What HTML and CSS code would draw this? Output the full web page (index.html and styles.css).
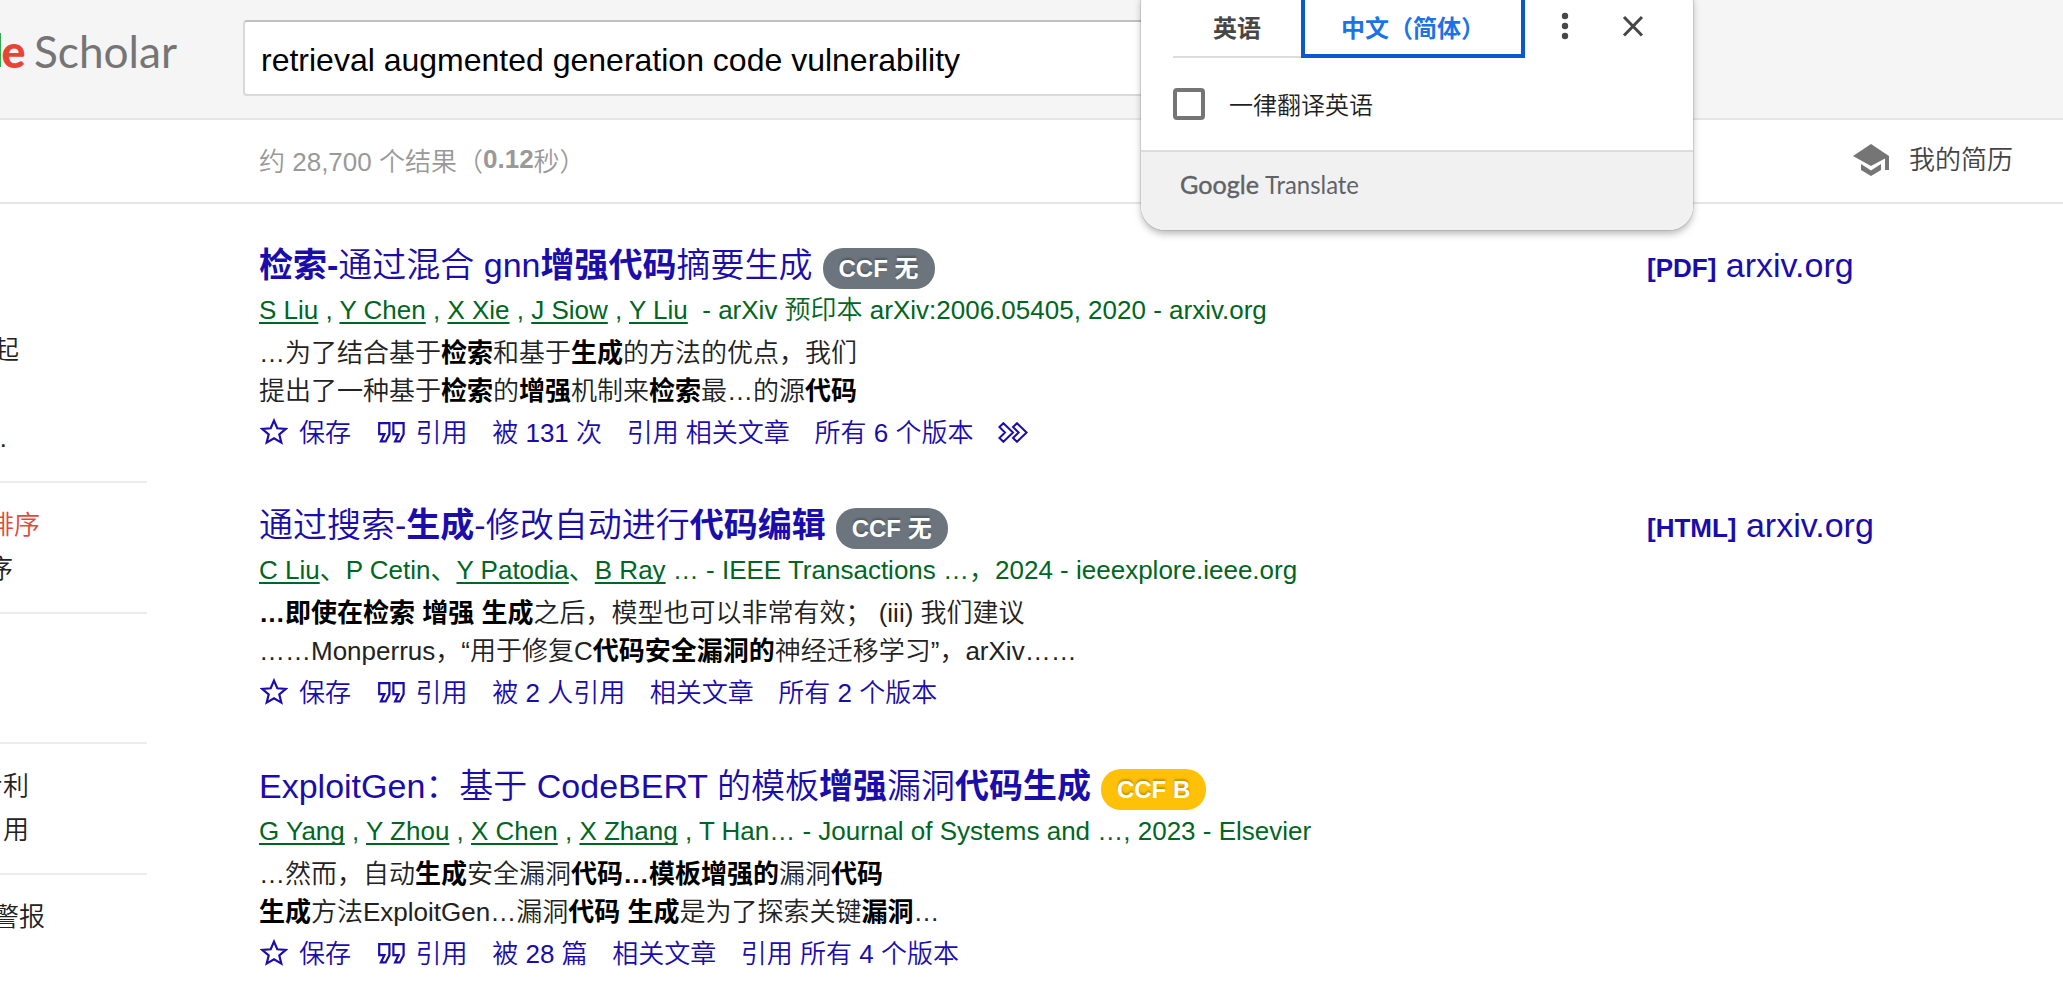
FILE: index.html
```html
<!DOCTYPE html>
<html lang="zh-CN">
<head>
<meta charset="utf-8">
<title>retrieval augmented generation code vulnerability - Google Scholar</title>
<link rel="stylesheet" href="styles.css">
</head>
<body>
<svg class="defs" width="0" height="0">
  <symbol id="star" viewBox="0 0 28 27"><path d="M14 2.6 17.3 10.3 25.7 11 19.3 16.5 21.3 24.6 14 20.3 6.7 24.6 8.7 16.5 2.3 11 10.7 10.3Z" fill="none" stroke="#1a0dab" stroke-width="2.2"/></symbol>
  <symbol id="quote" viewBox="0 0 27 21"><path d="M1.2 1.2H11.4V12.2L7.600 19.4H2.9L6.4 12.2H1.2ZM15.4 1.2H25.6V12.2L21.8 19.4H17.1L20.6 12.2H15.4Z" fill="none" stroke="#1a0dab" stroke-width="2.2"/></symbol>
  <symbol id="more" viewBox="0 0 30 21"><path d="M1.4 5 5.4 1.2 15 10.5 5.4 19.8 1.4 16 7 10.5ZM15 5 19 1.2 28.6 10.5 19 19.8 15 16 20.6 10.5Z" fill="none" stroke="#1a0dab" stroke-width="2"/></symbol>
</svg>

<header class="top">
  <svg class="logo" width="200" height="118">
    <rect x="0" y="33" width="1" height="34" fill="#34a853"/>
    <text x="1.5" y="68" class="logo-e" textLength="24" lengthAdjust="spacingAndGlyphs">e</text>
    <text x="34" y="68" class="logo-s" textLength="143" lengthAdjust="spacingAndGlyphs">Scholar</text>
  </svg>
  <div class="search">retrieval augmented generation code vulnerability</div>
</header>

<div class="bar">
  <div class="stats">约 28,700 个结果（<b>0.12</b>秒）</div>
  <a class="profile">
    <svg width="36" height="32" viewBox="0 0 36 32"><path d="M18 0 36 12V26H32V14.5L18 22 0 12ZM8 20 18 26.6 28 20V26L18 32 8 26Z" fill="#757575"/></svg>
    我的简历
  </a>
</div>

<div class="main">
  <nav class="side">
    <ul class="group first">
      <li class="w19">起</li>
      <li class="w8 gap">…</li>
    </ul>
    <ul class="group">
      <li class="w40 on">排序</li>
      <li class="w13">序</li>
    </ul>
    <ul class="group blank"></ul>
    <ul class="group">
      <li class="w29">专利</li>
      <li class="w29">引用</li>
    </ul>
    <ul class="group">
      <li class="w45">警报</li>
    </ul>
  </nav>

  <div class="results">
    <article class="result">
      <div class="body">
        <h3 class="title"><a><b>检索-</b>通过混合 gnn<b>增强代码</b>摘要生成</a><span class="badge">CCF 无</span></h3>
        <div class="meta"><u>S Liu</u> , <u>Y Chen</u> , <u>X Xie</u> , <u>J Siow</u> , <u>Y Liu</u>&nbsp; - arXiv 预印本 arXiv:2006.05405, 2020 - arxiv.org</div>
        <p class="snippet">…为了结合基于<b>检索</b>和基于<b>生成</b>的方法的优点，我们<br>提出了一种基于<b>检索</b>的<b>增强</b>机制来<b>检索</b>最…的源<b>代码</b></p>
        <div class="links"><a class="save"><svg width="28" height="27"><use href="#star"/></svg>保存</a><a class="cite"><svg width="27" height="21"><use href="#quote"/></svg>引用</a><a>被 131 次</a><a>引用 相关文章</a><a>所有 6 个版本</a><svg class="more" width="30" height="21"><use href="#more"/></svg></div>
      </div>
      <a class="source"><b>[PDF]</b> arxiv.org</a>
    </article>

    <article class="result second">
      <div class="body">
        <h3 class="title"><a>通过搜索-<b>生成</b>-修改自动进行<b>代码编辑</b></a><span class="badge">CCF 无</span></h3>
        <div class="meta"><u>C Liu</u>、P Cetin、<u>Y Patodia</u>、<u>B Ray</u> … - IEEE Transactions …，2024 - ieeexplore.ieee.org</div>
        <p class="snippet"><b>…即使在检索 增强 生成</b>之后，模型也可以非常有效； (iii) 我们建议<br>……Monperrus，“用于修复C<b>代码安全漏洞的</b>神经迁移学习”，arXiv……</p>
        <div class="links"><a class="save"><svg width="28" height="27"><use href="#star"/></svg>保存</a><a class="cite"><svg width="27" height="21"><use href="#quote"/></svg>引用</a><a>被 2 人引用</a><a>相关文章</a><a>所有 2 个版本</a></div>
      </div>
      <a class="source"><b>[HTML]</b> arxiv.org</a>
    </article>

    <article class="result">
      <div class="body">
        <h3 class="title"><a>ExploitGen：基于 CodeBERT 的模板<b>增强</b>漏洞<b>代码生成</b></a><span class="badge gold">CCF B</span></h3>
        <div class="meta"><u>G Yang</u> , <u>Y Zhou</u> , <u>X Chen</u> , <u>X Zhang</u> , T Han… - Journal of Systems and …, 2023 - Elsevier</div>
        <p class="snippet">…然而，自动<b>生成</b>安全漏洞<b>代码…模板增强的</b>漏洞<b>代码</b><br><b>生成</b>方法ExploitGen…漏洞<b>代码 生成</b>是为了探索关键<b>漏洞</b>…</p>
        <div class="links"><a class="save"><svg width="28" height="27"><use href="#star"/></svg>保存</a><a class="cite"><svg width="27" height="21"><use href="#quote"/></svg>引用</a><a>被 28 篇</a><a>相关文章</a><a>引用 所有 4 个版本</a></div>
      </div>
    </article>
  </div>
</div>

<aside class="popup">
  <div class="tabs">
    <span class="tab">英语</span><span class="tab active">中文（简体）</span>
    <svg class="dots" width="8" height="58"><circle cx="4" cy="16" r="3.2"/><circle cx="4" cy="26" r="3.2"/><circle cx="4" cy="36" r="3.2"/></svg>
    <svg class="close" width="22" height="58"><path d="M2 17 20 35.500M20 17 2 35.500" stroke="#474747" stroke-width="3"/></svg>
  </div>
  <label class="always"><span class="box"></span><span class="label">一律翻译英语</span></label>
  <div class="foot">
    <svg width="200" height="50">
      <text x="0" y="32" class="brand strong" textLength="79" lengthAdjust="spacingAndGlyphs">Google</text>
      <text x="85" y="32" class="brand" textLength="94" lengthAdjust="spacingAndGlyphs">Translate</text>
    </svg>
  </div>
</aside>
</body>
</html>
```
FILE: styles.css
```css
* { box-sizing: border-box; }

body {
  margin: 0;
  width: 2063px;
  height: 995px;
  overflow: hidden;
  position: relative;
  background: #fff;
  color: #222;
  font: 350 26px/38px "Liberation Sans", "Noto Sans CJK SC", sans-serif;
  text-spacing-trim: space-all;
  white-space: nowrap;
}

b { font-weight: 700; }

.defs { position: absolute; }

/* Header */
.top {
  display: flex;
  height: 120px;
  background: #f5f5f5;
  border-bottom: 2px solid #e5e5e5;
}

.logo { flex: none; margin-right: 43px; }
.logo-e { font: 900 46px Lato, sans-serif; fill: #ea4335; }
.logo-s { font: 400 45px Lato, sans-serif; fill: #757575; }

.search {
  width: 1100px;
  height: 76px;
  margin-top: 20px;
  padding-left: 16px;
  background: #fff;
  border: 2px solid #d9d9d9;
  border-top-color: #c0c0c0;
  border-radius: 4px;
  color: #000;
  font-size: 32px;
  line-height: 77px;
}

/* Result count and profile link */
.bar {
  display: flex;
  justify-content: space-between;
  height: 84px;
  padding: 0 50px 0 259px;
  border-bottom: 2px solid #e5e5e5;
}

.stats { color: #999; line-height: 84px; }
.stats b { display: inline-block; transform: translateY(-3px); }

.profile {
  display: flex;
  align-items: center;
  gap: 20px;
  height: 80px;
  color: #444;
}

.main { display: flex; }

/* Sidebar */
.side { width: 259px; flex: none; }

.group {
  list-style: none;
  width: 147px;
  margin: 0;
  height: 131px;
  padding: 20px 0 0;
  border-top: 2px solid #ededed;
}

.group.first { height: 277px; padding-top: 124px; border: 0; }
.group.blank { height: 130px; }
.group li {
  display: flex;
  justify-content: flex-end;
  height: 44px;
  line-height: 44px;
}
.group .gap { margin-top: 44px; }
.group .on { color: #dd4b39; }
.w8 { width: 8px; }
.w13 { width: 13px; }
.w19 { width: 19px; }
.w29 { width: 29px; }
.w40 { width: 40px; }
.w45 { width: 45px; }

/* Results */
.results { flex: 1; padding-top: 37px; }

.result {
  display: flex;
  height: 211px;
  margin-bottom: 49px;
}
.result.second { margin-bottom: 50px; }

.body { width: 1388px; flex: none; }

.title {
  display: flex;
  align-items: baseline;
  gap: 10px;
  height: 48px;
  margin: 0 0 2px;
  color: #1a0dab;
  font-size: 34px;
  font-weight: 350;
  line-height: 48px;
}

.badge {
  padding: 0 16px;
  border-radius: 20px;
  background: #6c757d;
  color: #fff;
  font-size: 24px;
  font-weight: 700;
  line-height: 41px;
  text-shadow: 0 -2px 2px rgba(0, 0, 0, .25);
}
.badge.gold { background: #ffc107; }

.meta { height: 38px; color: #006621; }
.meta u { text-decoration-thickness: 2px; text-underline-offset: 3px; text-decoration-skip-ink: none; }

.snippet { margin: 5px 0 4px; }
.snippet b { color: #000; }

.links { display: flex; gap: 24.600px; color: #1a0dab; }
.links a { display: flex; }
.save svg { margin: 4px 11px 0 1px; }
.cite svg { margin: 8px 11px 0 2px; }
.more { margin-top: 8px; }

.source { color: #1a0dab; font-size: 34px; line-height: 48px; height: 48px; }
.source b { font-size: 26px; }

/* Translate popup */
.popup {
  position: absolute;
  top: -20px;
  left: 1141px;
  width: 552px;
  height: 250px;
  padding-top: 20px;
  background: #fff;
  border-radius: 24px;
  box-shadow: 0 0 0 1px rgba(0, 0, 0, .09), 0 4px 7px rgba(60, 70, 64, .36);
  color: #1f1f1f;
  font-size: 24px;
}

.tabs { display: flex; height: 58px; padding-left: 32px; }

.tab {
  width: 128px;
  border-bottom: 2px solid #dadce0;
  color: #474747;
  font-weight: 700;
  line-height: 57px;
  text-align: center;
}
.tab.active {
  width: 224px;
  border: 4px solid #0b57d0;
  border-top: 0;
  color: #1a73e8;
}

.dots { margin-left: 36px; fill: #474747; }
.close { margin-left: 53px; }

.always {
  display: flex;
  align-items: center;
  gap: 24px;
  height: 92px;
  padding: 0 0 0 32px;
}
.box { width: 32px; height: 32px; border: 4px solid #757575; border-radius: 4px; }
.label { padding-top: 3px; }

.foot {
  height: 80px;
  padding: 10px 0 0 39px;
  background: #f1f1f1;
  border-top: 2px solid #dadce0;
  border-radius: 0 0 24px 24px;
}
.brand { font: 400 25px Lato, sans-serif; fill: #5f6368; }
.brand.strong { stroke: #5f6368; stroke-width: .4; }
```
